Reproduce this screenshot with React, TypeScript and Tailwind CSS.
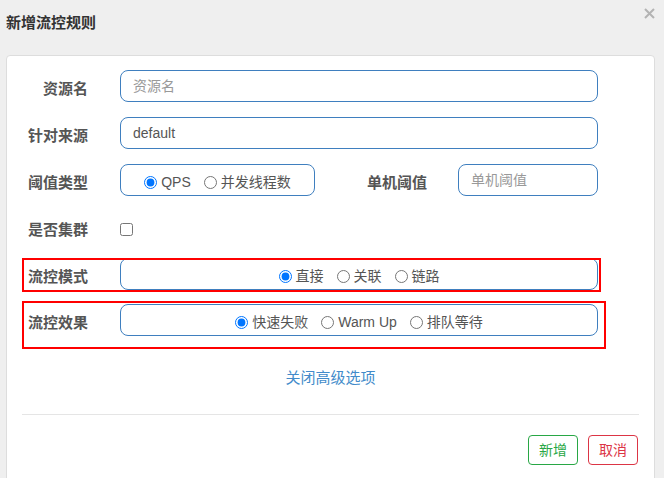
import { useState } from "react"

const font = { fontFamily: '"Liberation Sans", Arial, "Noto Sans CJK SC", sans-serif' }

type Option = { value: string; label: string }

const RadioGroup = ({
  name,
  options,
  value,
  onChange,
}: {
  name: string
  options: Option[]
  value: string
  onChange: (v: string) => void
}) => (
  <div className="flex items-center justify-center gap-[13px] pt-[4px]">
    {options.map((o) => (
      <label key={o.value} className="flex items-center gap-[4px] text-[14px] leading-[20px] text-[#555] cursor-pointer">
        <input
          type="radio"
          name={name}
          className="m-0 w-[13px] h-[13px]"
          checked={value === o.value}
          onChange={() => onChange(o.value)}
        />
        <span>{o.label}</span>
      </label>
    ))}
  </div>
)

const FieldLabel = ({ children }: { children: string }) => (
  <div className="w-[66px] shrink-0 pt-[5px] text-right text-[15px] leading-[20px] font-bold text-[#555]">{children}</div>
)

const App = () => {
  const [grade, setGrade] = useState("qps")
  const [strategy, setStrategy] = useState("direct")
  const [behavior, setBehavior] = useState("fast")

  return (
    <div className="w-[664px] h-[478px] overflow-hidden bg-[#efefef]" style={font}>
      {/* dialog header */}
      <div className="flex items-start justify-between pl-[6px] pr-[9px] h-[44px]">
        <h4 className="mt-[14px] text-[15px] leading-[18px] font-bold text-[#333]">新增流控规则</h4>
        <button className="mt-[8px] text-[#b3b3b3]">
          <svg width="11" height="11" viewBox="0 0 11 11">
            <path d="M1 1L10 10M10 1L1 10" stroke="currentColor" strokeWidth="2" />
          </svg>
        </button>
      </div>

      {/* form panel */}
      <div className="ml-[6px] mt-[11px] w-[649px] h-[440px] bg-white border border-[#dddddd] rounded px-[15px] pt-[14px]">
        <div className="flex items-center h-[32px] mb-[15px]">
          <FieldLabel>资源名</FieldLabel>
          <input
            className="ml-[32px] w-[478px] h-[32px] border border-[#3f7fbf] rounded-lg px-[12px] text-[14px] text-[#555] placeholder:text-[#999] outline-none"
            placeholder="资源名"
          />
        </div>

        <div className="flex items-center h-[32px] mb-[15px]">
          <FieldLabel>针对来源</FieldLabel>
          <input
            className="ml-[32px] w-[478px] h-[32px] border border-[#3f7fbf] rounded-lg px-[12px] text-[14px] text-[#555] outline-none"
            defaultValue="default"
          />
        </div>

        <div className="flex items-center h-[32px] mb-[15px]">
          <FieldLabel>阈值类型</FieldLabel>
          <div className="ml-[32px] w-[195px] h-[32px] border border-[#3f7fbf] rounded-lg flex items-center justify-center">
            <RadioGroup
              name="grade"
              value={grade}
              onChange={setGrade}
              options={[
                { value: "qps", label: "QPS" },
                { value: "thread", label: "并发线程数" },
              ]}
            />
          </div>
          <div className="ml-[52px] w-[60px] shrink-0 pt-[5px] text-[15px] leading-[20px] font-bold text-[#555]">单机阈值</div>
          <input
            className="ml-[31px] w-[140px] h-[32px] border border-[#3f7fbf] rounded-lg px-[12px] text-[14px] text-[#555] placeholder:text-[#999] outline-none"
            placeholder="单机阈值"
          />
        </div>

        <div className="flex items-center h-[32px] mb-[15px]">
          <FieldLabel>是否集群</FieldLabel>
          <input type="checkbox" className="ml-[32px] mt-[4px] w-[13px] h-[13px]" />
        </div>

        <div className="relative flex items-center h-[32px] mb-[14px]">
          <FieldLabel>流控模式</FieldLabel>
          <div className="ml-[32px] w-[478px] h-[32px] border border-[#3f7fbf] rounded-lg flex items-center justify-center">
            <RadioGroup
              name="strategy"
              value={strategy}
              onChange={setStrategy}
              options={[
                { value: "direct", label: "直接" },
                { value: "relate", label: "关联" },
                { value: "chain", label: "链路" },
              ]}
            />
          </div>
          <span className="pointer-events-none absolute left-0 top-0 w-[579px] h-[34px] border-2 border-[#ff0000]" />
        </div>

        <div className="relative flex items-center h-[32px]">
          <FieldLabel>流控效果</FieldLabel>
          <div className="ml-[32px] w-[478px] h-[32px] border border-[#3f7fbf] rounded-lg flex items-center justify-center">
            <RadioGroup
              name="behavior"
              value={behavior}
              onChange={setBehavior}
              options={[
                { value: "fast", label: "快速失败" },
                { value: "warm", label: "Warm Up" },
                { value: "queue", label: "排队等待" },
              ]}
            />
          </div>
          <span className="pointer-events-none absolute left-0 top-[-3px] w-[584px] h-[48px] border-2 border-[#ff0000]" />
        </div>

        <div className="mt-[30px] h-[20px] text-center">
          <a href="#" className="text-[15px] leading-[20px] text-[#428bca]">
            关闭高级选项
          </a>
        </div>

        <div className="mt-[28px] border-t border-[#e5e5e5]" />

        <div className="mt-[20px] flex justify-end gap-[10px] pr-px">
          <button className="w-[50px] h-[30px] rounded border border-[#28a745] text-[14px] text-[#28a745] bg-white">
            新增
          </button>
          <button className="w-[50px] h-[30px] rounded border border-[#dc3545] text-[14px] text-[#dc3545] bg-white">
            取消
          </button>
        </div>
      </div>
    </div>
  )
}

export default App
